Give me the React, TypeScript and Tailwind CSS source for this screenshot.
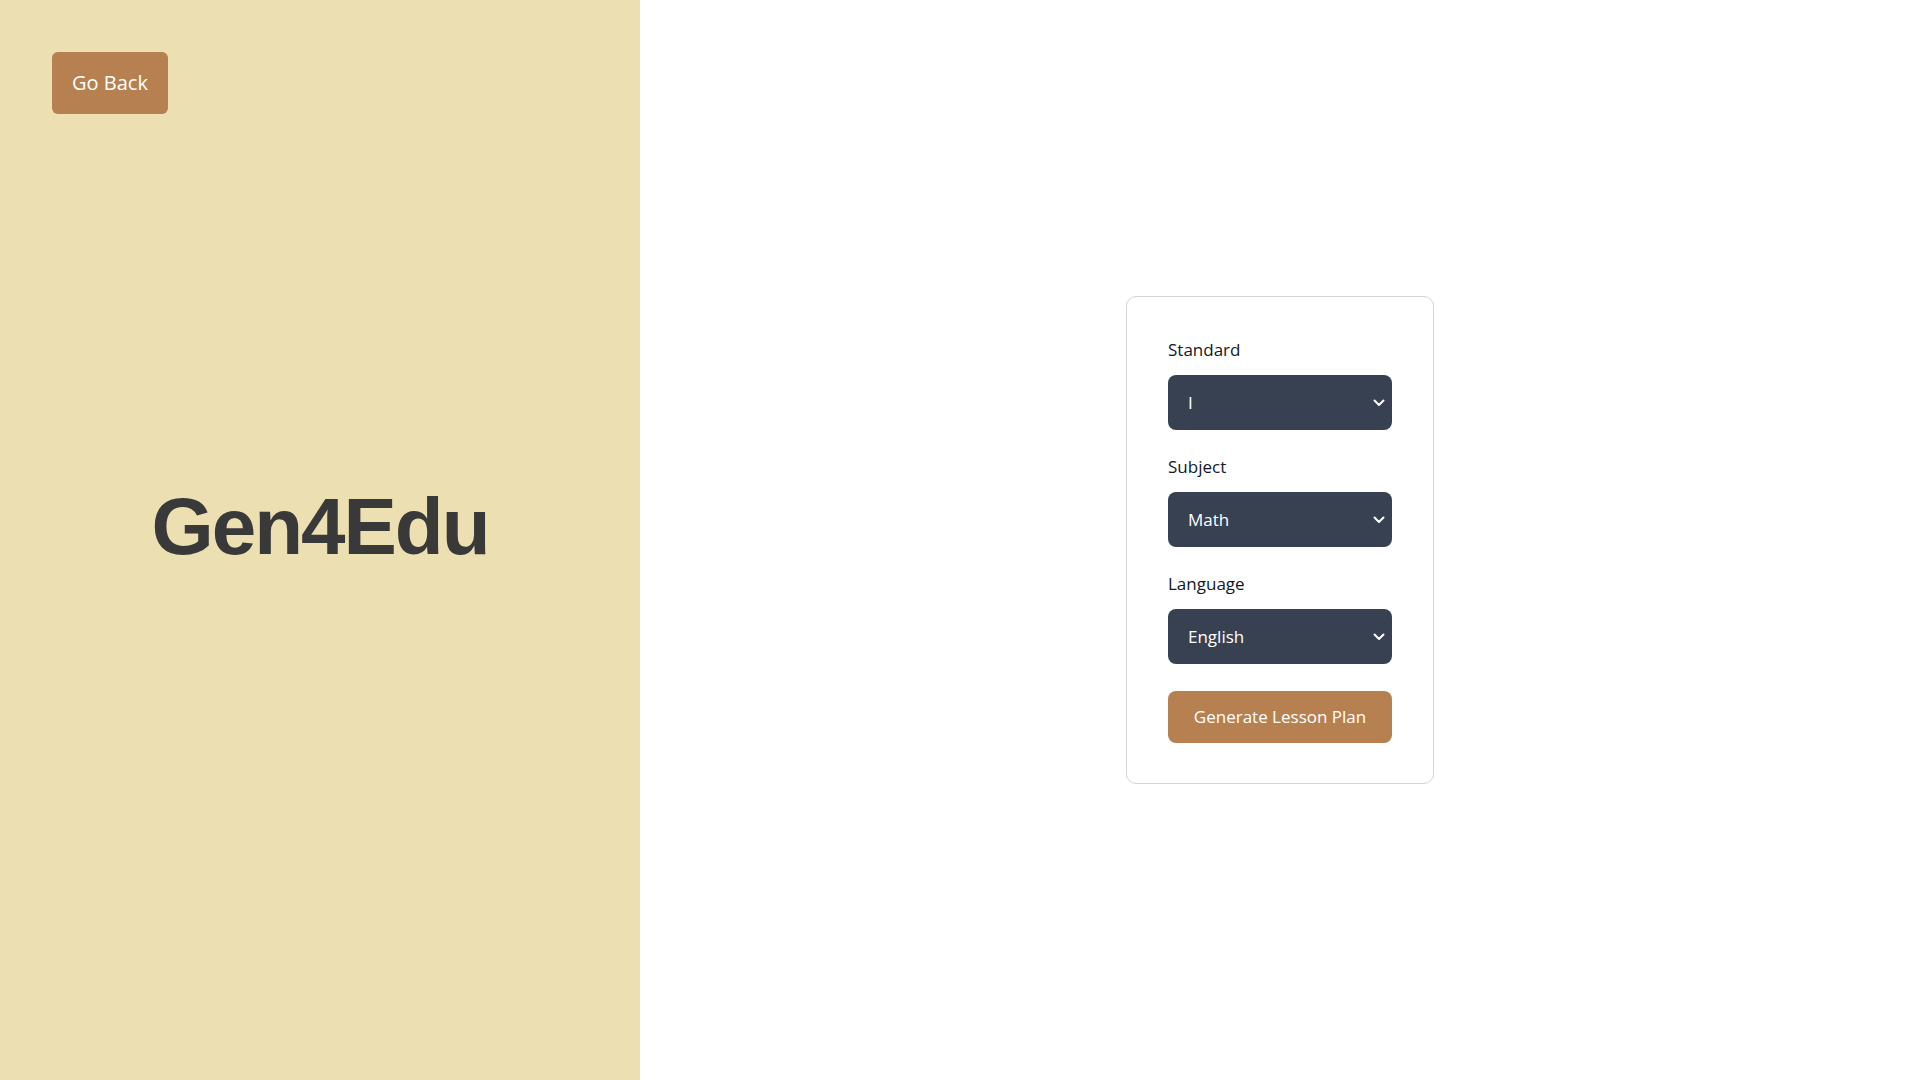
import { useState } from "react";

const STANDARDS = ["I", "II", "III", "IV", "V", "VI", "VII", "VIII", "IX", "X"];
const SUBJECTS = ["Math", "Science", "English", "Social Studies"];
const LANGUAGES = ["English", "Hindi", "Marathi", "Tamil"];

interface FieldProps {
  label: string;
  value: string;
  options: string[];
  onChange: (v: string) => void;
}

function Field({ label, value, options, onChange }: FieldProps) {
  return (
    <div className="mb-6">
      <label className="block mb-3 text-[17px] leading-[26px] font-medium text-gray-900">
        {label}
      </label>
      <div className="relative">
        <select
          value={value}
          onChange={(e) => onChange(e.target.value)}
          className="appearance-none w-full h-[55px] rounded-lg bg-[#374151] text-white text-[17px] pl-5 pr-8 outline-none"
        >
          {options.map((o) => (
            <option key={o} value={o}>
              {o}
            </option>
          ))}
        </select>
        <svg
          className="pointer-events-none absolute right-[7px] top-1/2 -translate-y-1/2"
          width="12"
          height="8"
          viewBox="0 0 12 8"
          fill="none"
        >
          <path d="M1.5 1.5L6 6L10.5 1.5" stroke="white" strokeWidth="2" strokeLinecap="round" strokeLinejoin="round" />
        </svg>
      </div>
    </div>
  );
}

export default function App() {
  const [standard, setStandard] = useState("I");
  const [subject, setSubject] = useState("Math");
  const [language, setLanguage] = useState("English");

  return (
    <div className="flex w-full h-[1080px] bg-white font-['Open_Sans',sans-serif]">
      <div className="w-[640px] h-full bg-[#ecdfb2] flex flex-col pt-[52px] pl-[52px]">
        <button className="w-[116px] h-[62px] rounded-md bg-[#b78050] text-white text-[20px]">
          Go Back
        </button>
        <div className="flex-1 flex items-center justify-center pb-[140px] pr-[52px]">
          <h1 className="font-['Liberation_Sans',Arial,sans-serif] font-bold text-[80px] leading-none tracking-tight text-[#393939]">
            Gen4Edu
          </h1>
        </div>
      </div>

      <div className="flex-1 flex items-center justify-center">
        <div className="w-[308px] border border-gray-300 rounded-[10px] bg-white px-[41px] py-10">
          <Field label="Standard" value={standard} options={STANDARDS} onChange={setStandard} />
          <Field label="Subject" value={subject} options={SUBJECTS} onChange={setSubject} />
          <Field label="Language" value={language} options={LANGUAGES} onChange={setLanguage} />
          <button className="mt-[3px] w-full h-[52px] rounded-lg bg-[#b78050] text-white text-[17px]">
            Generate Lesson Plan
          </button>
        </div>
      </div>
    </div>
  );
}
